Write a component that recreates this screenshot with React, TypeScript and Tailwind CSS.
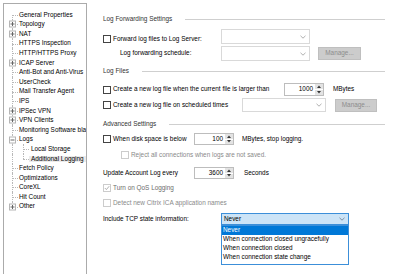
import React from 'react';

type TreeNode = {
  label: string;
  level: 0 | 1;
  expander?: '+' | '-';
  selected?: boolean;
};

const tree: TreeNode[] = [
  { label: 'General Properties', level: 0 },
  { label: 'Topology', level: 0, expander: '+' },
  { label: 'NAT', level: 0, expander: '+' },
  { label: 'HTTPS Inspection', level: 0 },
  { label: 'HTTP/HTTPS Proxy', level: 0 },
  { label: 'ICAP Server', level: 0, expander: '+' },
  { label: 'Anti-Bot and Anti-Virus', level: 0 },
  { label: 'UserCheck', level: 0 },
  { label: 'Mail Transfer Agent', level: 0 },
  { label: 'IPS', level: 0 },
  { label: 'IPSec VPN', level: 0, expander: '+' },
  { label: 'VPN Clients', level: 0, expander: '+' },
  { label: 'Monitoring Software blade', level: 0 },
  { label: 'Logs', level: 0, expander: '-' },
  { label: 'Local Storage', level: 1 },
  { label: 'Additional Logging', level: 1, selected: true },
  { label: 'Fetch Policy', level: 0 },
  { label: 'Optimizations', level: 0 },
  { label: 'CoreXL', level: 0 },
  { label: 'Hit Count', level: 0 },
  { label: 'Other', level: 0, expander: '+' },
];

function Expander({ sign }: { sign: '+' | '-' }) {
  return (
    <span className="absolute left-[5px] top-1/2 z-10 flex h-[7px] w-[7px] -translate-y-1/2 items-center justify-center border border-[#b5b5b5] bg-white">
      <svg width="5" height="5" viewBox="0 0 5 5">
        <line x1="0.5" y1="2.5" x2="4.5" y2="2.5" stroke="#666" strokeWidth="1" />
        {sign === '+' && <line x1="2.5" y1="0.5" x2="2.5" y2="4.5" stroke="#666" strokeWidth="1" />}
      </svg>
    </span>
  );
}

function TreeRow({ node, index }: { node: TreeNode; index: number }) {
  const first = index === 0;
  const last = index === tree.length - 1;
  const lastChild = node.label === 'Additional Logging';
  return (
    <div className="relative flex h-[9.6px] items-center whitespace-nowrap">
      <span
        className={`absolute left-[8px] w-0 border-l border-dotted border-[#b8b8b8] ${
          first ? 'top-1/2 bottom-0' : last ? 'top-0 bottom-1/2' : 'top-0 bottom-0'
        }`}
      />
      {node.level === 0 ? (
        <>
          <span className="absolute left-[8px] top-1/2 h-0 w-[6px] border-t border-dotted border-[#b8b8b8]" />
          {node.expander && <Expander sign={node.expander} />}
          <span className="pl-[15px]">{node.label}</span>
        </>
      ) : (
        <>
          <span
            className={`absolute left-[19px] w-0 border-l border-dotted border-[#b8b8b8] ${
              lastChild ? 'top-0 bottom-1/2' : 'top-0 bottom-0'
            }`}
          />
          <span className="absolute left-[19px] top-1/2 h-0 w-[6px] border-t border-dotted border-[#b8b8b8]" />
          <span className={`ml-[25px] px-[2px] ${node.selected ? 'bg-[#ebebeb]' : ''}`}>{node.label}</span>
        </>
      )}
    </div>
  );
}

function Checkbox({ checked, disabled }: { checked?: boolean; disabled?: boolean }) {
  return (
    <span
      className={`flex h-[8px] w-[8px] shrink-0 items-center justify-center border bg-white ${
        disabled ? 'border-[#cccccc]' : 'border-[#444444]'
      }`}
    >
      {checked && (
        <svg width="6" height="6" viewBox="0 0 6 6">
          <polyline points="0.8,3 2.4,4.6 5.2,1.2" fill="none" stroke={disabled ? '#a8a8a8' : '#222'} strokeWidth="0.9" />
        </svg>
      )}
    </span>
  );
}

function Chevron({ color = '#9a9a9a' }: { color?: string }) {
  return (
    <svg width="6" height="4" viewBox="0 0 6 4">
      <polyline points="0.5,0.8 3,3.2 5.5,0.8" fill="none" stroke={color} strokeWidth="0.8" />
    </svg>
  );
}

function Combo({ className }: { className: string }) {
  return (
    <div className={`flex items-center justify-end border border-[#d9d9d9] bg-white pr-[3px] ${className}`}>
      <Chevron />
    </div>
  );
}

function ManageButton({ className }: { className: string }) {
  return (
    <div className={`flex items-center justify-center border border-[#bfbfbf] bg-[#cccccc] text-[#8c8c8c] ${className}`}>
      Manage...
    </div>
  );
}

function Spinner({ value, className }: { value: string; className: string }) {
  return (
    <div className={`flex items-stretch border border-[#bdbdbd] bg-white ${className}`}>
      <div className="flex flex-1 items-center justify-end pr-[2px]">{value}</div>
      <div className="flex w-[8px] flex-col gap-px bg-white">
        <div className="flex flex-1 items-center justify-center bg-[#e3e3e3]">
          <svg width="4" height="3" viewBox="0 0 4 3">
            <polygon points="0,3 2,0.5 4,3" fill="#333" />
          </svg>
        </div>
        <div className="flex flex-1 items-center justify-center bg-[#e3e3e3]">
          <svg width="4" height="3" viewBox="0 0 4 3">
            <polygon points="0,0 2,2.5 4,0" fill="#333" />
          </svg>
        </div>
      </div>
    </div>
  );
}

function GroupHeader({ title, className }: { title: string; className: string }) {
  return (
    <div className={`flex h-[10px] items-center pr-[15px] text-[#333] ${className}`}>
      <span>{title}</span>
      <span className="ml-[13px] h-px flex-1 bg-[#cfcfcf]" />
    </div>
  );
}

export default function App() {
  return (
    <div className="flex h-[274px] w-[400px] overflow-hidden bg-white font-['Liberation_Sans',Arial,sans-serif] text-[6.4px] leading-none text-black">
      {/* Tree */}
      <div className="ml-[3px] mt-[3px] h-[290px] w-[84px] shrink-0 overflow-hidden border border-[#ababab] pt-[6px]">
        {tree.map((node, i) => (
          <TreeRow key={node.label} node={node} index={i} />
        ))}
      </div>

      {/* Settings */}
      <div className="ml-[16px] flex flex-1 flex-col pt-[14px]">
        <GroupHeader title="Log Forwarding Settings" className="" />

        <div className="mt-[5px] flex h-[15px]">
          <div className="flex w-[118px] items-center gap-[2px] self-end pb-[1px]">
            <Checkbox />
            <span>Forward log files to Log Server:</span>
          </div>
          <Combo className="w-[89px]" />
        </div>

        <div className="mt-[2px] flex h-[15px] items-center">
          <div className="w-[118px] pl-[17px]">Log forwarding schedule:</div>
          <Combo className="h-full w-[89px]" />
          <ManageButton className="ml-[8px] h-[13px] w-[43px]" />
        </div>

        <GroupHeader title="Log Files" className="mt-[5px]" />

        <div className="mt-[7px] flex h-[13px] items-center">
          <div className="flex w-[181px] items-center gap-[2px]">
            <Checkbox />
            <span>Create a new log file when the current file is larger than</span>
          </div>
          <Spinner value="1000" className="h-full w-[40px]" />
          <span className="ml-[9px]">MBytes</span>
        </div>

        <div className="mt-[2px] flex h-[14px] items-center">
          <div className="flex w-[139px] items-center gap-[2px]">
            <Checkbox />
            <span>Create a new log file on scheduled times</span>
          </div>
          <Combo className="h-full w-[84px]" />
          <ManageButton className="ml-[9px] h-[13px] w-[42px]" />
        </div>

        <GroupHeader title="Advanced Settings" className="mt-[7px]" />

        <div className="mt-[4px] flex h-[12px] items-center">
          <div className="flex w-[91px] items-center gap-[2px]">
            <Checkbox />
            <span>When disk space is below</span>
          </div>
          <Spinner value="100" className="h-full w-[40px]" />
          <span className="ml-[8px]">MBytes, stop logging.</span>
        </div>

        <div className="mt-[5px] flex h-[10px] items-center gap-[2px] pl-[18px] text-[#8a8a8a]">
          <Checkbox disabled />
          <span>Reject all connections when logs are not saved.</span>
        </div>

        <div className="mt-[7px] flex h-[12px] items-center">
          <div className="w-[91px]">Update Account Log every</div>
          <Spinner value="3600" className="h-full w-[40px]" />
          <span className="ml-[10px]">Seconds</span>
        </div>

        <div className="mt-[4px] flex h-[10px] items-center gap-[2px] text-[#6d6d6d]">
          <Checkbox checked disabled />
          <span>Turn on QoS Logging</span>
        </div>

        <div className="mt-[5px] flex h-[10px] items-center gap-[2px] text-[#8a8a8a]">
          <Checkbox disabled />
          <span>Detect new Citrix ICA application names</span>
        </div>

        <div className="mt-[5px] flex h-[12px] items-center">
          <div className="w-[118px]">Include TCP state information:</div>
          <div className="relative h-full w-[128px]">
            <div className="flex h-full items-center justify-between border border-[#3c8fd9] bg-[#cce4f7] pl-[2px] pr-[3px]">
              <span>Never</span>
              <Chevron color="#6b7b8c" />
            </div>
            <div className="absolute left-0 top-full z-20 flex w-full flex-col border border-[#3c8fd9] bg-white pb-[2px]">
              <div className="flex h-[9px] items-center bg-[#0078d7] pl-[1px] text-white">Never</div>
              <div className="flex h-[9px] items-center pl-[1px]">When connection closed ungracefully</div>
              <div className="flex h-[9px] items-center pl-[1px]">When connection closed</div>
              <div className="flex h-[9px] items-center pl-[1px]">When connection state change</div>
            </div>
          </div>
        </div>
      </div>
    </div>
  );
}
